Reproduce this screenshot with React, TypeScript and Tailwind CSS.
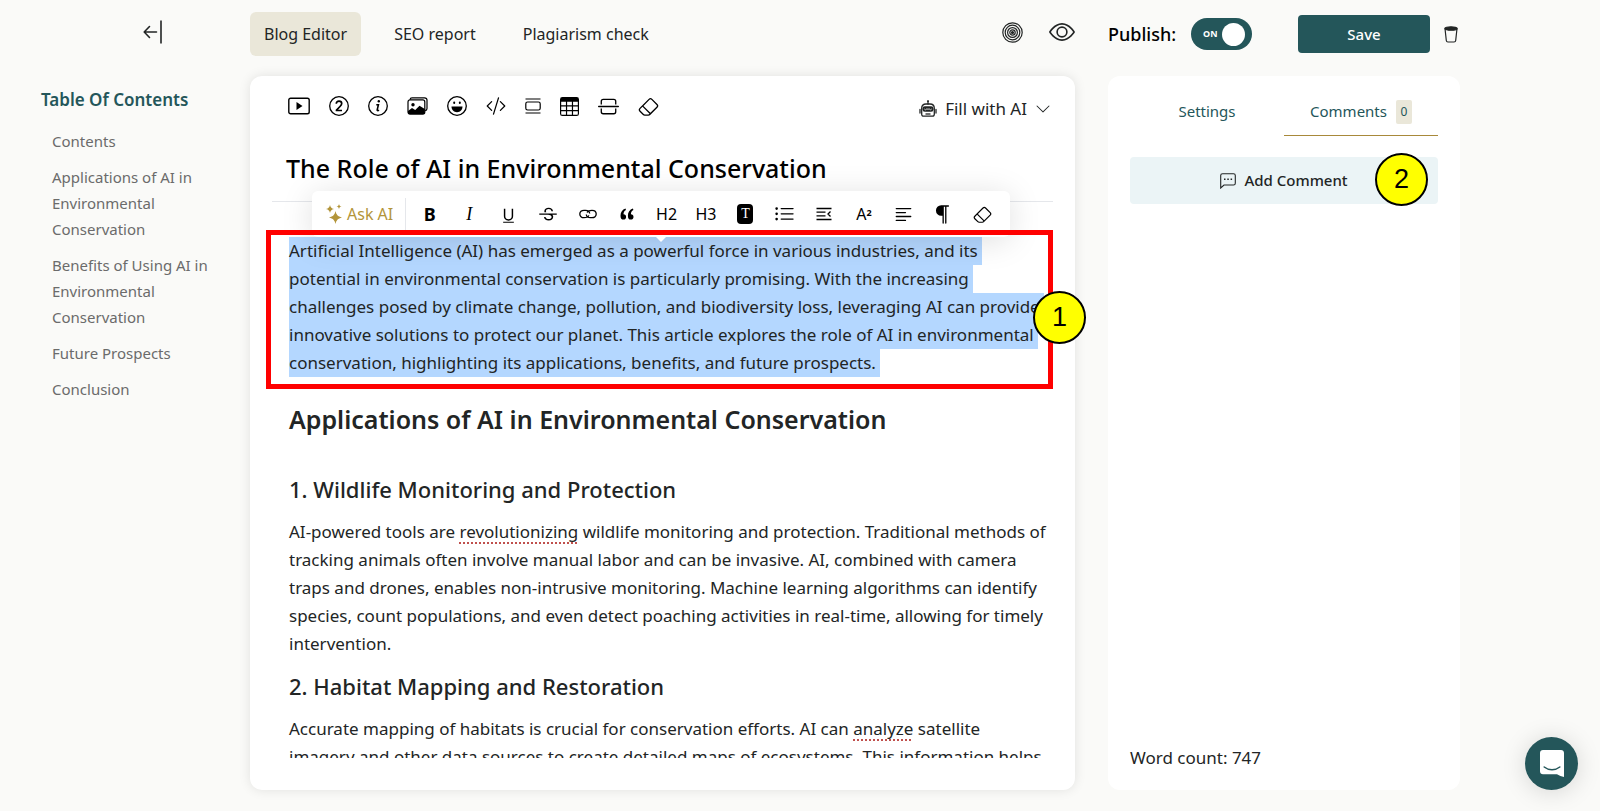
import { useState } from "react";
import type { ReactNode } from "react";
import {
  BsChevronDown,
  BsCodeSlash,
  BsEraser,
  BsEye,
  BsHr,
  BsListUl,
  BsParagraph,
  BsTable,
  BsTextLeft,
  BsTypeStrikethrough,
  BsTypeUnderline,
} from "react-icons/bs";

const toc = [
  "Contents",
  "Applications of AI in Environmental Conservation",
  "Benefits of Using AI in Environmental Conservation",
  "Future Prospects",
  "Conclusion",
];

const intro = [
  "Artificial Intelligence (AI) has emerged as a powerful force in various industries, and its",
  "potential in environmental conservation is particularly promising. With the increasing",
  "challenges posed by climate change, pollution, and biodiversity loss, leveraging AI can provide",
  "innovative solutions to protect our planet. This article explores the role of AI in environmental",
  "conservation, highlighting its applications, benefits, and future prospects.",
];

function CollapseIcon() {
  return (
    <svg width="20" height="24" viewBox="0 0 20 24" fill="none" stroke="currentColor" strokeWidth="1.6">
      <path d="M13.5 12H1.5M6.500 6.500 1.200 12l5.300 5.500" strokeLinejoin="round" strokeLinecap="round" />
      <path d="M18 .5v23" />
    </svg>
  );
}

function RingsIcon() {
  return (
    <svg width="21" height="21" viewBox="0 0 21 21" fill="none" stroke="currentColor" strokeWidth="1.2">
      <circle cx="10.500" cy="10.500" r="9.700" />
      <circle cx="10.500" cy="10.500" r="7.300" />
      <circle cx="10.500" cy="10.500" r="4.900" />
      <circle cx="10.500" cy="10.500" r="2.700" />
      <circle cx="10.500" cy="10.500" r="1" fill="currentColor" />
    </svg>
  );
}

function TrashIcon() {
  return (
    <svg width="14" height="17" viewBox="0 0 14 17" fill="none" stroke="currentColor" strokeWidth="1.2">
      <path d="M1 2.500 2.300 14.500C2.400 15.500 3 16 4 16h6c1 0 1.600-.5 1.700-1.500L13 2.500" />
      <ellipse cx="7" cy="2.500" rx="6.200" ry="1.700" fill="currentColor" />
    </svg>
  );
}

function VideoIcon() {
  return (
    <svg width="22" height="18" viewBox="0 0 22 18" fill="none" stroke="currentColor" strokeWidth="1.4">
      <rect x=".8" y="1.200" width="20.400" height="15.600" rx="1.800" />
      <path d="M8.500 5v8l6-4z" fill="currentColor" stroke="none" />
    </svg>
  );
}

function NumberIcon() {
  return (
    <svg width="20" height="20" viewBox="0 0 20 20" fill="none" stroke="currentColor" strokeWidth="1.3">
      <circle cx="10" cy="10" r="9.300" />
      <path d="M7.300 7.700c0-1.600 1.100-2.600 2.700-2.600s2.700.9 2.700 2.400c0 1.100-.6 1.900-1.700 3l-3.500 3.700v.3h5.500" strokeWidth="1.700" />
    </svg>
  );
}

function InfoIcon() {
  return (
    <svg width="20" height="20" viewBox="0 0 20 20" fill="none" stroke="currentColor" strokeWidth="1.3">
      <circle cx="10" cy="10" r="9.300" />
      <circle cx="10.800" cy="5.300" r="1.200" fill="currentColor" stroke="none" />
      <path d="M8.300 8.700h2.100l-1.200 5.200c-.2.900.8.900 1.800.2" strokeWidth="1.600" />
    </svg>
  );
}

function ImagesIcon() {
  return (
    <svg width="21" height="18" viewBox="0 0 21 18" fill="none" stroke="currentColor" strokeWidth="1.200">
      <path d="M3 2.600C3.200 1.400 3.800.8 5 .8h12.500c1.700 0 2.500.8 2.500 2.300v8.400c0 1.300-.6 2-1.900 2.200" />
      <rect x="1" y="2.900" width="16.800" height="14.200" rx="2" />
      <circle cx="6" cy="7.700" r="1.700" fill="currentColor" stroke="none" />
      <path d="M1 15v-1l4-3 3.200 2 4.300-4.200 5.300 3.200v4c0 .7-.5 1.100-1.300 1.100H2.300C1.500 17.100 1 16.700 1 15z" fill="currentColor" stroke="none" />
    </svg>
  );
}

function EmojiIcon() {
  return (
    <svg width="20" height="20" viewBox="0 0 20 20" fill="none" stroke="currentColor" strokeWidth="1.300">
      <circle cx="10" cy="10" r="9.300" />
      <ellipse cx="7.200" cy="6.700" rx="1" ry="1.200" fill="currentColor" stroke="none" />
      <ellipse cx="12.800" cy="6.700" rx="1" ry="1.200" fill="currentColor" stroke="none" />
      <path d="M4.500 10.500h11c0 3.300-2.200 5.700-5.500 5.700s-5.500-2.400-5.500-5.700z" fill="currentColor" stroke="none" />
    </svg>
  );
}

function SectionIcon() {
  return (
    <svg width="16" height="16" viewBox="0 0 16 16" fill="none" stroke="currentColor" strokeWidth="1.2">
      <path d="M.5 1h15M.5 15h15" />
      <rect x=".8" y="4" width="14.400" height="8" rx="1.800" />
    </svg>
  );
}

function RobotIcon() {
  return (
    <svg width="18" height="18" viewBox="0 0 18 18" fill="none" stroke="currentColor" strokeWidth="1.300">
      <path d="M9 1v3M1 9.500v3.500M17 9.500v3.500" strokeLinecap="round" />
      <path d="M2.700 14.300V8.200C2.700 5.500 4.300 4 7 4h4c2.700 0 4.300 1.500 4.300 4.200v6.100c0 1.300-.7 1.900-2 1.900H4.700c-1.300 0-2-.6-2-1.900z" />
      <rect x="3.500" y="6.300" width="11" height="5.400" rx="2.300" fill="currentColor" stroke="none" />
      <path d="m5.300 9 1.300.8L8 8.700l1 .8 1-.8 1.400 1.100 1.300-.8" stroke="#fff" strokeWidth=".8" />
      <path d="M6.500 14h5" />
      <circle cx="9" cy="1.200" r=".9" fill="currentColor" stroke="none" />
    </svg>
  );
}

function SparklesIcon() {
  return (
    <svg width="17" height="20" viewBox="0 0 17 20" fill="currentColor">
      <path d="M9.500 7c.8 3.700 2.200 5.300 6.500 6.500-4.300 1.200-5.700 2.800-6.500 6.500-.8-3.700-2.200-5.300-6.500-6.500C7.300 12.300 8.700 10.700 9.500 7z" />
      <path d="M4 1c.5 2.300 1.300 3.300 4 4-2.700.7-3.500 1.700-4 4-.5-2.300-1.300-3.300-4-4 2.700-.7 3.500-1.700 4-4z" />
      <path d="M13 0c.3 1.600.9 2.200 2.600 2.600-1.700.4-2.300 1-2.600 2.600-.3-1.600-.9-2.200-2.600-2.600C12.100 2.200 12.700 1.600 13 0z" />
    </svg>
  );
}

function LinkIcon() {
  return (
    <svg width="18" height="10" viewBox="0 0 18 10" fill="none" stroke="currentColor" strokeWidth="1.300">
      <path d="M9.800 6.400C9.300 7.900 7.500 8.700 5 8.700 2.500 8.700.8 7.200.8 5S2.500 1.300 5 1.300h1.500c2.500 0 4 1.200 4.200 3.200" />
      <path d="M8.200 3.600C8.700 2.100 10.500 1.300 13 1.300c2.500 0 4.200 1.500 4.200 3.700S15.500 8.700 13 8.700h-1.500c-2.500 0-4-1.200-4.200-3.200" />
    </svg>
  );
}

function QuoteIcon() {
  return (
    <svg width="14" height="12" viewBox="0 0 14 12" fill="currentColor">
      <path d="M5.500.5C2.300 1.500.5 4.200.5 7.700c0 2.500 1 3.900 2.900 3.900 1.600 0 2.700-1.100 2.700-2.700 0-1.500-1-2.600-2.600-2.600 0-1.800.7-3.100 2.500-4.200zM12.900.5c-3.200 1-5 3.700-5 7.200 0 2.500 1 3.900 2.900 3.900 1.600 0 2.700-1.100 2.700-2.700 0-1.500-1-2.600-2.600-2.600 0-1.800.7-3.100 2.500-4.200z" />
    </svg>
  );
}

function IndentIcon() {
  return (
    <svg width="16" height="14" viewBox="0 0 16 14" fill="none" stroke="currentColor" strokeWidth="1.300">
      <path d="M.5 1.500h15M.5 5.200h9M.5 8.800h9M.5 12.500h15M14.500 4.500 12 7l2.500 2.500" />
    </svg>
  );
}

function CommentIcon() {
  return (
    <svg width="16" height="16" viewBox="0 0 16 16" fill="none" stroke="currentColor" strokeWidth="1.100">
      <path d="M.7 15V2.500C.7 1.300 1.300.8 2.500.8h11c1.200 0 1.800.5 1.800 1.700v7.700c0 1.200-.6 1.800-1.800 1.800H4z" />
      <path d="M4 6.300h1.500M7.300 6.300h1.500M10.600 6.300h1.500" strokeWidth="1.500" />
    </svg>
  );
}

function ChatIcon() {
  return (
    <svg width="24" height="27" viewBox="0 0 24 27" fill="none">
      <path d="M3 0h18c1.800 0 3 1.200 3 3v24c-2.500-.6-4.700-1.500-7-2.800H3c-1.800 0-3-1.200-3-3V3c0-1.800 1.200-3 3-3z" fill="#fff" />
      <path d="M4.200 17c4.500 3.600 11.100 3.600 15.600 0" stroke="#24565a" strokeWidth="1.600" strokeLinecap="round" />
    </svg>
  );
}

const insertTools: { name: string; icon: ReactNode }[] = [
  { name: "Video", icon: <VideoIcon /> },
  { name: "Number", icon: <NumberIcon /> },
  { name: "Info", icon: <InfoIcon /> },
  { name: "Images", icon: <ImagesIcon /> },
  { name: "Emoji", icon: <EmojiIcon /> },
  { name: "Code", icon: <BsCodeSlash size={20} /> },
  { name: "Section", icon: <SectionIcon /> },
  { name: "Table", icon: <BsTable size={19} /> },
  { name: "Divider", icon: <BsHr size={21} /> },
  { name: "Clear", icon: <BsEraser size={21} /> },
];

const formatTools: { name: string; icon: ReactNode }[] = [
  { name: "Bold", icon: <span className="text-lg font-bold">B</span> },
  { name: "Italic", icon: <span className="font-['Liberation_Serif',serif] text-lg italic">I</span> },
  { name: "Underline", icon: <BsTypeUnderline size={19} /> },
  { name: "Strikethrough", icon: <BsTypeStrikethrough size={20} /> },
  { name: "Link", icon: <LinkIcon /> },
  { name: "Quote", icon: <QuoteIcon /> },
  { name: "Heading 2", icon: <span className="text-base">H2</span> },
  { name: "Heading 3", icon: <span className="text-base">H3</span> },
  {
    name: "Text colour",
    icon: (
      <span className="flex h-5 w-4 items-center justify-center rounded-sm bg-black font-['Liberation_Serif',serif] text-sm text-white">
        T
      </span>
    ),
  },
  { name: "List", icon: <BsListUl size={21} /> },
  { name: "Indent", icon: <IndentIcon /> },
  {
    name: "Superscript",
    icon: (
      <span className="text-base">
        A<sup className="text-[9px] font-bold">2</sup>
      </span>
    ),
  },
  { name: "Align", icon: <BsTextLeft size={21} /> },
  { name: "Paragraph", icon: <BsParagraph size={21} /> },
  { name: "Clear format", icon: <BsEraser size={19} /> },
];

function Marker({ children }: { children: ReactNode }) {
  return (
    <span className="flex h-[53px] w-[53px] items-center justify-center rounded-full border-2 border-black bg-[#ffff00] font-['Liberation_Sans',sans-serif] text-[27px] text-black">
      {children}
    </span>
  );
}

function Misspelled({ children }: { children: ReactNode }) {
  return (
    <span className="underline decoration-[#c0504d] decoration-dotted decoration-2 underline-offset-4">
      {children}
    </span>
  );
}

function Sidebar() {
  return (
    <aside className="w-[250px] shrink-0">
      <div className="flex h-[76px] justify-end pt-5 pr-[87px]">
        <button aria-label="Collapse" className="h-6">
          <CollapseIcon />
        </button>
      </div>
      <nav className="pt-2 pr-10 pl-[41px]">
        <h2 className="text-[17px] leading-8 font-semibold text-[#24565a]">Table Of Contents</h2>
        <ul className="mt-3 flex flex-col gap-[10px] pl-[11px] text-[15px] leading-[26px] text-[#6b6b6b]">
          {toc.map((item) => (
            <li key={item}>
              <a href="#">{item}</a>
            </li>
          ))}
        </ul>
      </nav>
    </aside>
  );
}

function FloatingToolbar() {
  return (
    <div className="absolute top-[115px] right-[65px] left-[62px] flex h-[46px] items-center rounded-md bg-white pr-2 text-black shadow-[0_4px_32px_rgba(0,0,0,0.13)]">
      <button className="flex w-[93px] items-center gap-1 pl-[14px] text-base whitespace-nowrap text-[#b3953a]">
        <SparklesIcon />
        Ask AI
      </button>
      <div className="mr-1 h-8 w-px bg-gray-200" />
      {formatTools.map((tool) => (
        <button key={tool.name} aria-label={tool.name} className="flex h-8 flex-1 items-center justify-center">
          {tool.icon}
        </button>
      ))}
      <span className="absolute top-full left-1/2 -ml-[5px] border-x-[5px] border-t-[5px] border-x-transparent border-t-white" />
    </div>
  );
}

function Editor() {
  return (
    <main className="flex min-w-0 flex-1 flex-col">
      <div className="flex h-[76px] items-start justify-between pt-3">
        <nav className="flex gap-[19px] text-base whitespace-nowrap">
          <button className="h-11 rounded-md bg-[#eae7d9] px-[14px]">Blog Editor</button>
          <button className="h-11 px-[14px]">SEO report</button>
          <button className="h-11 px-[14px]">Plagiarism check</button>
        </nav>
        <div className="flex h-10 items-center gap-[26px]">
          <button aria-label="Score">
            <RingsIcon />
          </button>
          <button aria-label="Preview">
            <BsEye size={26} />
          </button>
        </div>
      </div>

      <section className="relative flex min-h-0 flex-1 flex-col rounded-xl bg-white shadow-[0_0_12px_rgba(0,0,0,0.1)]">
        <div className="flex items-center justify-between pt-[14px] pr-6 pl-[38px]">
          <div className="flex h-8 items-center gap-[19px] text-black">
            {insertTools.map((tool) => (
              <button key={tool.name} aria-label={tool.name}>
                {tool.icon}
              </button>
            ))}
          </div>
          <button className="flex h-8 items-center gap-2 pt-[6px] text-[17px]">
            <RobotIcon />
            Fill with AI
            <BsChevronDown size={16} />
          </button>
        </div>
        <h1 className="mx-[22px] border-b border-gray-200 px-[14px] pt-[26px] pb-[13px] text-[25px] leading-10 font-medium text-black">
          The Role of AI in Environmental Conservation
        </h1>

        <article className="mt-[35px] mb-8 min-h-0 flex-1 overflow-hidden pl-[39px] text-[17px] leading-7 whitespace-nowrap">
          <p>
            {intro.map((line) => (
              <span key={line} className="block">
                <span className="inline-block bg-[#b4d7ff] pr-1">{line}</span>
              </span>
            ))}
          </p>
          <h2 className="mt-6 text-[25px] leading-9 font-semibold">
            Applications of AI in Environmental Conservation
          </h2>
          <h3 className="mt-9 text-[22px] leading-8 font-medium">1. Wildlife Monitoring and Protection</h3>
          <p className="mt-[13px]">
            AI-powered tools are <Misspelled>revolutionizing</Misspelled> wildlife monitoring and protection.
            Traditional methods of
            <br />
            tracking animals often involve manual labor and can be invasive. AI, combined with camera
            <br />
            traps and drones, enables non-intrusive monitoring. Machine learning algorithms can identify
            <br />
            species, count populations, and even detect poaching activities in real-time, allowing for timely
            <br />
            intervention.
          </p>
          <h3 className="mt-3 text-[22px] leading-8 font-medium">2. Habitat Mapping and Restoration</h3>
          <p className="mt-[13px]">
            Accurate mapping of habitats is crucial for conservation efforts. AI can{" "}
            <Misspelled>analyze</Misspelled> satellite
            <br />
            imagery and other data sources to create detailed maps of ecosystems. This information helps
          </p>
        </article>

        <FloatingToolbar />

        {/* step 1 callout around the selected paragraph */}
        <div className="pointer-events-none absolute top-[154px] right-[22px] left-4 h-[159px] border-[5px] border-[#ff0000]">
          <div className="absolute top-[56px] -right-[38px]">
            <Marker>1</Marker>
          </div>
        </div>
      </section>
    </main>
  );
}

function CommentsPanel() {
  const [published, setPublished] = useState(true);

  return (
    <aside className="mr-[140px] ml-[33px] flex w-[352px] shrink-0 flex-col">
      <div className="flex h-[76px] items-start justify-between pt-[15px]">
        <label className="flex h-[38px] items-center gap-[15px] text-lg font-medium text-black">
          Publish:
          <input
            type="checkbox"
            className="peer sr-only"
            checked={published}
            onChange={(e) => setPublished(e.target.checked)}
          />
          <span className="flex h-8 w-[61px] items-center justify-between rounded-full bg-[#24565a] pr-[7px] pl-3 text-[9px] font-bold text-white">
            {published ? "ON" : "OFF"}
            <span className="h-[23px] w-[23px] rounded-full bg-white" />
          </span>
        </label>
        <div className="flex items-center gap-[14px] pr-[2px]">
          <button className="h-[38px] w-[132px] rounded bg-[#24565a] text-[15px] font-medium text-white">Save</button>
          <button aria-label="Delete">
            <TrashIcon />
          </button>
        </div>
      </div>

      <section className="flex flex-1 flex-col rounded-xl bg-white px-[22px] pt-3">
        <div className="flex text-[15px] text-[#24565a]">
          <button className="h-12 flex-1 border-b border-transparent">Settings</button>
          <button className="flex h-12 flex-1 items-center justify-center gap-[9px] border-b border-[#a8893a]">
            Comments
            <span className="flex h-6 w-4 items-center justify-center rounded-xs bg-[#eae7d9] text-xs">0</span>
          </button>
        </div>
        <div className="relative mt-[21px]">
          <button className="flex h-[47px] w-full items-center justify-center gap-2 rounded bg-[#ebf4f6] text-[15px] font-medium">
            <CommentIcon />
            Add Comment
          </button>
          <div className="absolute -top-1 right-[10px]">
            <Marker>2</Marker>
          </div>
        </div>
        <p className="mt-auto pb-[18px] text-[17px] leading-7">Word count: 747</p>
      </section>
    </aside>
  );
}

export default function App() {
  return (
    <div className="flex h-screen overflow-hidden bg-[#fafaf8] pb-[21px] font-['Noto_Sans',sans-serif] text-[#222525]">
      <Sidebar />
      <Editor />
      <CommentsPanel />
      <button
        aria-label="Open chat"
        className="fixed right-[22px] bottom-[21px] flex h-[53px] w-[53px] items-center justify-center rounded-full bg-[#24565a] shadow-[0_2px_24px_rgba(0,0,0,0.15)]"
      >
        <ChatIcon />
      </button>
    </div>
  );
}
